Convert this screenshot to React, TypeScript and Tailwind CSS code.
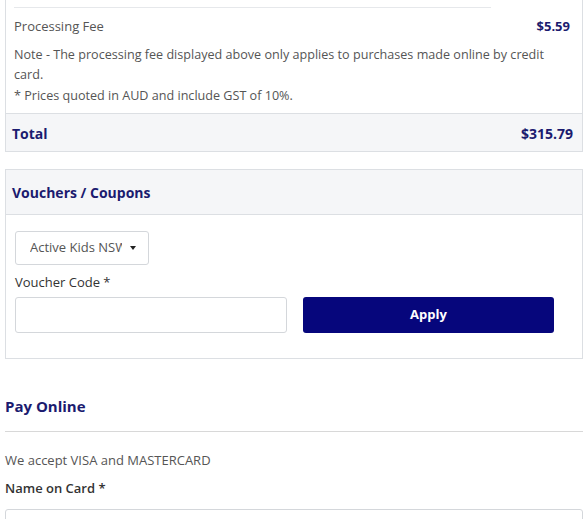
export default function App() {
  return (
    <div className="w-[587px] bg-white font-['Open_Sans',sans-serif] text-[13px] text-[#555]">
      {/* Order summary tail */}
      <div className="ml-[5px] w-[578px] border-x border-b border-[#dcdfe3]">
        <div className="px-[8px] pt-[7px]">
          <div className="w-[477px] border-t border-[#e6e8eb]" />
        </div>
        <div className="flex h-[37px] items-center justify-between pl-[8px] pr-[12px]">
          <span>Processing Fee</span>
          <span className="font-bold text-[#1b1b6f]">$5.59</span>
        </div>
        <div className="pl-[8px] pb-[7px] text-[12.6px] leading-[20px]">
          <p className="w-[548px]">
            Note - The processing fee displayed above only applies to purchases made online by credit card.
          </p>
          <p className="mt-[1px]">* Prices quoted in AUD and include GST of 10%.</p>
        </div>
        <div className="flex h-[38px] items-center justify-between border-t border-[#dcdfe3] bg-[#f5f6f8] pl-[6px] pr-[9px] pt-[1px] text-[14px] font-bold text-[#1b1b6f]">
          <span>Total</span>
          <span>$315.79</span>
        </div>
      </div>

      {/* Vouchers */}
      <div className="ml-[5px] mt-[17px] w-[578px] border border-[#dcdfe3]">
        <div className="flex h-[45px] items-center border-b border-[#dcdfe3] bg-[#f5f6f8] px-[6px] text-[14px] font-bold text-[#1b1b6f]">
          Vouchers / Coupons
        </div>
        <div className="px-[9px] pt-[16px] pb-[25px]">
          <button className="flex h-[34px] w-[134px] items-center gap-[8px] rounded-[3px] border border-[#d4d7db] bg-white pl-[14px] text-[#555]">
            <span className="w-[92px] overflow-hidden whitespace-nowrap text-left">Active Kids NSW</span>
            <span className="h-0 w-0 border-x-[3.5px] border-t-[4px] border-x-transparent border-t-[#222]" />
          </button>
          <div className="mt-[8px] h-[18px] leading-[18px] text-[#333]">Voucher Code *</div>
          <div className="mt-[6px] flex gap-[16px]">
            <input className="h-[36px] w-[272px] rounded-[3px] border border-[#d4d7db] bg-white outline-none" />
            <button className="h-[36px] w-[251px] rounded-[3px] bg-[#06067c] text-[13px] font-bold text-white">
              Apply
            </button>
          </div>
        </div>
      </div>

      {/* Pay online */}
      <div className="ml-[5px] mt-[37px] w-[578px]">
        <h2 className="text-[15px] leading-[20px] font-bold text-[#1b1b6f]">Pay Online</h2>
        <div className="mt-[15px] border-t border-[#d8d8d8]" />
        <p className="mt-[19px] leading-[18px]">We accept VISA and MASTERCARD</p>
        <div className="mt-[10px] leading-[18px] font-semibold text-[#333]">Name on Card *</div>
        <input className="mt-[12px] h-[35px] w-[578px] rounded-[3px] border border-[#d4d7db] bg-white outline-none" />
      </div>
    </div>
  );
}
